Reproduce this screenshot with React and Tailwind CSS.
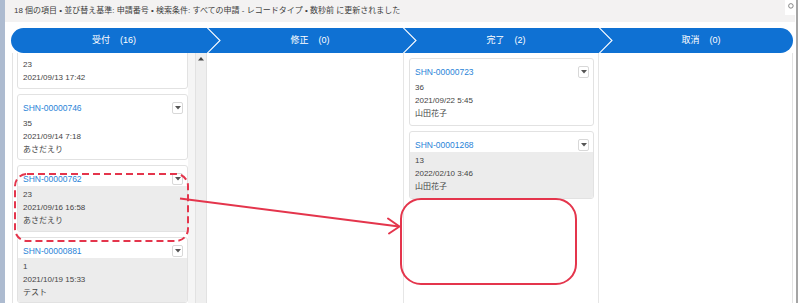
import React from "react";

const FONT = "font-['Liberation_Sans','Noto_Sans_CJK_JP',sans-serif]";

function DropBtn() {
  return (
    <div className="w-[11px] h-[12px] border border-[#d8d8d8] rounded-[2px] bg-white flex items-center justify-center shrink-0">
      <svg width="6" height="4" viewBox="0 0 6 4">
        <polygon points="0,0 6,0 3,3.5" fill="#555" />
      </svg>
    </div>
  );
}

function Card({ id, lines, gray, hideTitle }) {
  return (
    <div className="border border-[#e2e2e2] rounded-[3px] bg-white overflow-hidden">
      <div className="flex items-start justify-between pt-[6px] pl-[5px] pr-[4px] h-[20px]">
        <span className="text-[8.5px] leading-[14px] text-[#2a84d8]">{hideTitle ? "" : id}</span>
        {!hideTitle && <div className="mt-[1px]"><DropBtn /></div>}
      </div>
      <div className={`pt-[2px] pb-[5px] pl-[5px] ${gray ? "bg-[#ececec]" : ""}`}>
        {lines.map((l, i) => (
          <div key={i} className="text-[8px] leading-[13px] text-[#444]">{l}</div>
        ))}
      </div>
    </div>
  );
}

function Segment({ label, count, chevron }) {
  return (
    <div className="relative flex items-center justify-center gap-[10px] pl-[10px] text-white text-[9px]">
      <span>{label}</span>
      <span>({count})</span>
      {chevron && (
        <svg className="absolute top-0 left-full" width="14" height="25" viewBox="0 0 14 25">
          <polyline points="0,-0.5 13,12.5 0,25.5" fill="none" stroke="white" strokeWidth="1.1" />
        </svg>
      )}
    </div>
  );
}

export default function App() {
  return (
    <div className={`relative w-[800px] h-[303px] overflow-hidden bg-white flex ${FONT}`}>
      <div className="w-[5px] h-full bg-[#adbbd0]" />
      <div className="w-[790px] flex flex-col">
        <div className="h-[22px] bg-[#f3f2f2] flex items-start justify-between shrink-0">
          <div className="pl-[9px] pt-[5px] text-[8px] leading-[11px] text-[#3e3e3e] whitespace-nowrap">
            18 個の項目 • 並び替え基準: 申請番号 • 検索条件: すべての申請 - レコードタイプ • 数秒前 に更新されました
          </div>
          <div className="w-[10px] h-[15px] bg-white flex items-start pt-[3px] pl-[3px]">
            <svg width="7" height="7" viewBox="0 0 8 8">
              <circle cx="3.3" cy="3.3" r="2.6" fill="none" stroke="#777" strokeWidth="1" />
            </svg>
          </div>
        </div>
        <div className="mt-[6px] ml-[6px] mr-[2px] h-[25px] rounded-full bg-[#0f71d3] grid grid-cols-[196px_196px_196px_194px] shrink-0">
          <Segment label="受付" count="16" chevron />
          <Segment label="修正" count="0" chevron />
          <Segment label="完了" count="2" chevron />
          <Segment label="取消" count="0" />
        </div>
        <div className="ml-[7px] mr-[2px] flex-1 grid grid-cols-[195px_196px_196px_194px] min-h-0">
          {/* column 1 */}
          <div className="flex border-l border-[#e3e3e3] min-h-0 overflow-hidden">
            <div className="w-[171px] ml-[4px] flex flex-col gap-[5px] mt-[-18px]">
              <Card hideTitle lines={["23", "2021/09/13 17:42"]} />
              <Card id="SHN-00000746" lines={["35", "2021/09/14 7:18", "あさだえり"]} />
              <Card id="SHN-00000762" gray lines={["23", "2021/09/16 16:58", "あさだえり"]} />
              <Card id="SHN-00000881" gray lines={["1", "2021/10/19 15:33", "テスト"]} />
            </div>
            <div className="w-[7px] bg-[#f5f5f5]" />
            <div className="w-[12px] bg-[#efefef] border-l border-r border-[#e2e2e2] flex justify-center pt-[4px]">
              <svg width="6" height="4" viewBox="0 0 6 4">
                <polygon points="0,3.5 6,3.5 3,0" fill="#444" />
              </svg>
            </div>
          </div>
          {/* column 2 */}
          <div />
          {/* column 3 */}
          <div className="border-l border-r border-[#e6e6e6] pl-[5px] pr-[4px] pt-[5px] flex flex-col gap-[5px]">
            <Card id="SHN-00000723" lines={["36", "2021/09/22 5:45", "山田花子"]} />
            <Card id="SHN-00001268" gray lines={["13", "2022/02/10 3:46", "山田花子"]} />
          </div>
          {/* column 4 */}
          <div className="border-r border-[#e3e3e3]" />
        </div>
      </div>
      <div className="w-[5px] h-full flex">
        <div className="w-[1px]" />
        <div className="w-[2px] bg-[#a5a5a5]" />
      </div>

      <svg className="absolute inset-0 pointer-events-none" width="800" height="303" viewBox="0 0 800 303">
        <rect x="15" y="174" width="173" height="67" rx="12" fill="none" stroke="#e4354c" strokeWidth="2" strokeDasharray="7 4" />
        <line x1="180" y1="198.5" x2="399" y2="226.5" stroke="#e4354c" strokeWidth="2" />
        <polyline points="388,218.5 399.5,226.5 389,233.5" fill="none" stroke="#e4354c" strokeWidth="2" strokeLinecap="round" strokeLinejoin="round" />
        <rect x="401" y="199" width="175" height="85" rx="20" fill="none" stroke="#e4354c" strokeWidth="2" />
      </svg>
    </div>
  );
}
